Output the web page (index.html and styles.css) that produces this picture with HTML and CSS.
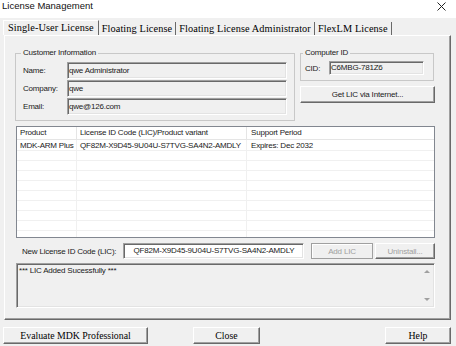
FILE: index.html
```html
<!DOCTYPE html>
<html lang="en">
<head>
  <meta charset="UTF-8">
  <title>License Management</title>
  <link rel="stylesheet" href="styles.css">
</head>
<body>

<div class="titlebar">
  <span>License Management</span>
  <svg class="close-x" width="9" height="9" viewBox="0 0 9 9"><path d="M0.5 0.5 L8.5 8.5 M8.5 0.5 L0.5 8.5" stroke="#222" stroke-width="1" fill="none"/></svg>
</div>

<div class="tabs">
  <div class="tab active">Single-User License</div>
  <div class="tab">Floating License</div>
  <div class="tab">Floating License Administrator</div>
  <div class="tab">FlexLM License</div>
</div>

<div class="panel">
  <div class="top-row">
    <fieldset class="group customer">
      <legend>Customer Information</legend>
      <div class="field-row"><label>Name:</label><div class="field">qwe Administrator</div></div>
      <div class="field-row"><label>Company:</label><div class="field">qwe</div></div>
      <div class="field-row"><label>Email:</label><div class="field">qwe@126.com</div></div>
    </fieldset>

    <div class="computer-col">
      <fieldset class="group computer">
        <legend>Computer ID</legend>
        <div class="field-row cid-row"><label>CID:</label><div class="field">C6MBG-781Z6</div></div>
      </fieldset>
      <button class="btn get-lic">Get LIC via Internet...</button>
    </div>
  </div>

  <div class="list">
    <div class="list-head">
      <div>Product</div>
      <div>License ID Code (LIC)/Product variant</div>
      <div>Support Period</div>
    </div>
    <div class="list-body">
      <div>MDK-ARM Plus</div>
      <div>QF82M-X9D45-9U04U-S7TVG-SA4N2-AMDLY</div>
      <div>Expires: Dec 2032</div>
    </div>
  </div>

  <div class="new-row">
    <label>New License ID Code (LIC):</label>
    <div class="field new-lic">QF82M-X9D45-9U04U-S7TVG-SA4N2-AMDLY</div>
    <button class="btn add-lic" disabled>Add LIC</button>
    <button class="btn uninstall" disabled>Uninstall...</button>
  </div>

  <div class="log">
    <div class="log-text">*** LIC Added Sucessfully ***</div>
    <div class="scrollbar">
      <span class="arrow up"></span>
      <span class="arrow down"></span>
    </div>
  </div>
</div>

<div class="bottom-row">
  <button class="btn wide evaluate">Evaluate MDK Professional</button>
  <button class="btn wide close">Close</button>
  <button class="btn wide help">Help</button>
</div>

</body>
</html>
```

FILE: styles.css
```css
:root {
  --face: #f0f0f0;
  --light: #ffffff;
  --shadow: #a0a0a0;
  --dark: #696969;
  --frame: #c8c8c8;
  --disabled: #a0a0a0;
}
* {
  box-sizing: border-box;
}
body {
  margin: 0;
  width: 456px;
  height: 346px;
  overflow: hidden;
  background-color: var(--face);
  font-family: "Liberation Sans", Arial, sans-serif;
  font-size: 8px;
  letter-spacing: -0.2px;
  color: #1a1a1a;
}
.titlebar {
  height: 18px;
  background-color: var(--light);
  display: flex;
  justify-content: space-between;
  padding: 0 10px 0 2px;
  font-size: 9.5px;
  letter-spacing: 0;
  line-height: 12px;
  color: #111;
}
.close-x {
  margin-top: 2px;
}
.tabs {
  display: flex;
  height: 17px;
  padding-left: 3px;
  font-family: "Liberation Serif", serif;
  font-size: 10.3px;
  letter-spacing: 0.1px;
  color: #000;
}
.tab {
  margin-top: 4px;
  padding: 0 3px;
  line-height: 13px;
  border-right: 1px solid var(--dark);
}
.tab.active {
  margin-top: 2px;
  line-height: 14px;
  padding: 0 4px;
  border-top: 1px solid var(--light);
  border-left: 1px solid var(--light);
}
.panel {
  margin: 0 5px 0 4px;
  border: 1px solid var(--light);
  border-right-color: var(--dark);
  border-bottom-color: var(--dark);
  box-shadow: inset -1px -1px 0 var(--shadow);
  padding: 12px 15px 11px 11px;
}
.top-row {
  display: flex;
  align-items: flex-start;
  gap: 5px;
  margin-left: -1px;
}
.group {
  margin: 0;
  min-width: 0;
  border: 1px solid var(--frame);
}
.group legend {
  margin-left: -2px;
  padding: 0 2px;
  line-height: 10px;
}
.customer {
  width: 282px;
  padding: 4px 7px 5px 7px;
}
.computer {
  width: 134px;
  padding: 3px 9px 5px 4px;
}
.field-row {
  display: flex;
  align-items: center;
  height: 17px;
  margin-bottom: 1px;
}
.field-row:last-child {
  margin-bottom: 0;
}
.field-row label {
  width: 44px;
}
.field {
  flex: 1;
  height: 17px;
  padding-left: 1px;
  line-height: 15px;
  white-space: nowrap;
  border: 1px solid;
  border-color: var(--shadow) var(--light) var(--light) var(--shadow);
  box-shadow: inset 1px 1px 0 var(--dark), inset -1px -1px 0 #e3e3e3;
}
.cid-row {
  height: 14px;
}
.cid-row label {
  width: 24px;
}
.cid-row .field {
  height: 14px;
  line-height: 12px;
}
.computer-col {
  display: flex;
  flex-direction: column;
}
.btn {
  height: 17px;
  padding: 0;
  background-color: var(--face);
  border: 1px solid;
  border-color: var(--light) var(--dark) var(--dark) var(--light);
  box-shadow: inset -1px -1px 0 var(--shadow);
  font: inherit;
  letter-spacing: inherit;
  color: #1a1a1a;
}
.btn:disabled {
  color: var(--disabled);
}
.get-lic {
  margin-top: 5px;
  width: 135px;
  height: 17px;
}
.list {
  margin-top: 5px;
  height: 112px;
  display: flex;
  flex-direction: column;
  background-color: var(--light);
  border: 1px solid #828790;
}
.list-head,
.list-body {
  display: grid;
  grid-template-columns: 60px 170px 1fr;
}
.list-head {
  height: 13px;
  line-height: 12px;
  border-bottom: 1px solid #e5e5e5;
}
.list-head div {
  padding-left: 3px;
  border-right: 1px solid #e5e5e5;
}
.list-body {
  flex: 1;
  line-height: 11px;
  background-image: repeating-linear-gradient(to bottom, transparent 0 9px, #f0f0f0 9px 10px);
  background-position: 0 1px;
}
.list-body div {
  padding-left: 3px;
  white-space: nowrap;
  overflow: hidden;
  border-right: 1px solid #f0f0f0;
}
.list-body div:last-child,
.list-head div:last-child {
  padding-left: 4px;
  border-right: 0;
}
.new-row {
  display: flex;
  align-items: center;
  height: 16px;
  margin-top: 5px;
}
.new-row label {
  width: 101px;
  margin-left: 6px;
}
.new-lic {
  flex: none;
  width: 181px;
  height: 16px;
  line-height: 14px;
  text-align: center;
  background-color: var(--light);
}
.add-lic {
  width: 62px;
  height: 16px;
  margin-left: 7px;
  border-color: var(--shadow);
  box-shadow: inset 1px 1px 0 var(--light);
}
.uninstall {
  width: 60px;
  height: 16px;
  margin-left: 2px;
}
.log {
  margin-top: 4px;
  height: 45px;
  display: flex;
  border: 1px solid;
  border-color: var(--shadow) var(--light) var(--light) var(--shadow);
  box-shadow: inset 1px 1px 0 var(--dark), inset -1px -1px 0 #e3e3e3;
}
.log-text {
  flex: 1;
  padding: 2px 0 0 2px;
  line-height: 10px;
}
.scrollbar {
  width: 14px;
  display: flex;
  flex-direction: column;
  align-items: center;
  justify-content: space-between;
  padding: 6px 0 6px 0;
}
.arrow {
  width: 0;
  height: 0;
  border-left: 3px solid transparent;
  border-right: 3px solid transparent;
}
.arrow.up {
  border-bottom: 3px solid var(--disabled);
}
.arrow.down {
  border-top: 3px solid var(--disabled);
}
.bottom-row {
  display: flex;
  margin-top: 7px;
  padding: 0 5px 0 3px;
}
.wide {
  font-family: "Liberation Serif", serif;
  font-size: 9.8px;
  letter-spacing: 0;
  color: #000;
}
.evaluate {
  width: 145px;
}
.close {
  width: 67px;
  margin-left: 45px;
}
.help {
  width: 66px;
  margin-left: auto;
}
```
